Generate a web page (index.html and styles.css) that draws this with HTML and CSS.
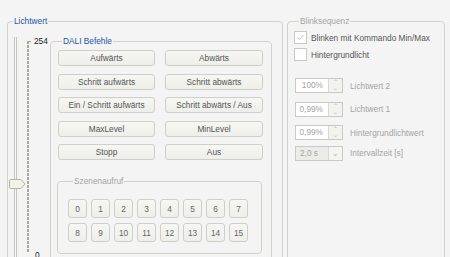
FILE: index.html
```html
<!DOCTYPE html>
<html lang="de">
<head>
    <meta charset="UTF-8">
    <title>Lichtwert</title>
    <link rel="stylesheet" href="styles.css">
</head>
<body>
    <fieldset class="group light">
        <legend>Lichtwert</legend>
        <div class="slider">
            <div class="track"></div>
            <div class="ticks"></div>
            <span class="max">254</span>
            <span class="min">0</span>
            <svg class="thumb" width="17" height="10" viewBox="0 0 17 10">
                <path d="M0.5 1.5 Q0.5 0.5 1.5 0.5 H12 L16 5 L12 9.5 H1.5 Q0.5 9.5 0.5 8.5 Z" fill="#f3f2e6" stroke="#b3b2a4"/>
            </svg>
        </div>
        <fieldset class="group dali">
            <legend>DALI Befehle</legend>
            <div class="commands">
                <button>Aufwärts</button>
                <button>Abwärts</button>
                <button>Schritt aufwärts</button>
                <button>Schritt abwärts</button>
                <button>Ein / Schritt aufwärts</button>
                <button>Schritt abwärts / Aus</button>
                <button>MaxLevel</button>
                <button>MinLevel</button>
                <button>Stopp</button>
                <button>Aus</button>
            </div>
            <fieldset class="group scenes">
                <legend>Szenenaufruf</legend>
                <div class="scene-grid">
                    <button>0</button><button>1</button><button>2</button><button>3</button>
                    <button>4</button><button>5</button><button>6</button><button>7</button>
                    <button>8</button><button>9</button><button>10</button><button>11</button>
                    <button>12</button><button>13</button><button>14</button><button>15</button>
                </div>
            </fieldset>
        </fieldset>
    </fieldset>

    <fieldset class="group blink">
        <legend>Blinksequenz</legend>
        <label class="check">
            <span class="box">
                <svg width="9" height="9" viewBox="0 0 9 9"><path d="M1.5 4.5 L3.5 6.5 L7.5 2" fill="none" stroke="#c0c0c0" stroke-width="1"/></svg>
            </span>
            Blinken mit Kommando Min/Max
        </label>
        <label class="check">
            <span class="box"></span>
            Hintergrundlicht
        </label>

        <div class="fields">
            <div class="field">
                <div class="spin"><span class="value">100%</span><span class="arrows">&#8963;<br>&#8964;</span></div>
                <span>Lichtwert 2</span>
            </div>
            <div class="field">
                <div class="spin"><span class="value">0,99%</span><span class="arrows">&#8963;<br>&#8964;</span></div>
                <span>Lichtwert 1</span>
            </div>
            <div class="field">
                <div class="spin"><span class="value">0,99%</span><span class="arrows">&#8963;<br>&#8964;</span></div>
                <span>Hintergrundlichtwert</span>
            </div>
            <div class="field interval">
                <div class="spin combo"><span class="value">2,0 s</span><span class="arrows">&#8964;</span></div>
                <span>Intervallzeit [s]</span>
            </div>
        </div>
    </fieldset>
</body>
</html>
```

FILE: styles.css
```css
body {
    font-family: "Liberation Sans", Arial, sans-serif;
    font-size: 8.3px;
    background-color: #f4f4f4;
    margin: 0;
    padding: 16px 0 0 7px;
    height: 257px;
    box-sizing: border-box;
    overflow: hidden;
    display: flex;
    align-items: flex-start;
    gap: 4px;
}
.group {
    margin: 0;
    border: 1px solid #d2d2cc;
    border-radius: 4px;
    min-width: 0;
}
.group legend {
    padding: 0 1px;
    margin-left: 5px;
    line-height: 10px;
    color: #1f52a6;
}
.light {
    width: 276px;
    height: 250px;
    box-sizing: border-box;
    padding: 10px 0 0 0;
    display: flex;
    align-items: flex-start;
}
.slider {
    position: relative;
    width: 42px;
    height: 225px;
    flex-shrink: 0;
}
.track {
    position: absolute;
    left: 6px;
    top: 1px;
    bottom: 0;
    width: 1px;
    border-left: 1px solid #c4c4c0;
    border-right: 1px solid #c4c4c0;
    background: #f8f8f8;
}
.ticks {
    position: absolute;
    left: 19px;
    top: 5px;
    height: 212px;
    width: 2px;
    background: repeating-linear-gradient(to bottom, #a9a99b 0 3px, transparent 3px 4px);
}
.ticks::before {
    content: "";
    position: absolute;
    left: 0;
    top: 0;
    width: 4px;
    height: 1px;
    background: #a9a99b;
}
.max, .min {
    position: absolute;
    left: 26px;
    line-height: 10px;
    color: #222;
}
.max { top: 0; }
.min { top: 214px; left: 27px; }
.thumb {
    position: absolute;
    left: 1px;
    top: 143px;
}
.dali {
    width: 222px;
    height: 240px;
    box-sizing: border-box;
    padding: 4px 0 0 6px;
}
.commands {
    display: grid;
    grid-template-columns: 97px 98px;
    column-gap: 10px;
    row-gap: 7.5px;
    margin-left: 1px;
}
button {
    font-family: inherit;
    font-size: inherit;
    color: #555;
    background: linear-gradient(#f6f6f3, #eeeeea);
    border: 1px solid #cfcfc8;
    border-radius: 3px;
    padding: 0;
    margin: 0;
}
.commands button {
    height: 16px;
}
.scenes {
    width: 205px;
    height: 78px;
    box-sizing: border-box;
    margin-top: 16px;
    padding: 13px 0 0 10px;
}
.scenes legend {
    color: #a4a4a4;
}
.scene-grid {
    display: grid;
    grid-template-columns: repeat(8, 19px);
    grid-auto-rows: 19px;
    column-gap: 4px;
    row-gap: 5px;
}
.scene-grid button {
    color: #666;
}
.blink {
    width: 158px;
    height: 250px;
    box-sizing: border-box;
    padding: 5px 0 0 6px;
}
.blink legend {
    color: #a4a4a4;
}
.check {
    display: flex;
    align-items: center;
    gap: 4px;
    height: 13px;
    margin-bottom: 4px;
    color: #555;
}
.box {
    width: 11px;
    height: 11px;
    border: 1px solid #c8c8c8;
    background: #fff;
    display: flex;
    align-items: center;
    justify-content: center;
}
.fields {
    margin-top: 17px;
    margin-left: 1px;
    display: flex;
    flex-direction: column;
    gap: 8.5px;
}
.field {
    display: flex;
    align-items: center;
    gap: 7px;
    color: #a4a4a4;
}
.interval {
    margin-top: -3px;
}
.spin {
    width: 48px;
    height: 15px;
    box-sizing: border-box;
    border: 1px solid #c9c9c9;
    background: #fff;
    display: flex;
}
.spin .value {
    flex: 1;
    text-align: right;
    padding-right: 5px;
    line-height: 13px;
}
.spin .arrows {
    width: 13px;
    border-left: 1px solid #d8d8d4;
    background: #f2f2ee;
    font-size: 6px;
    line-height: 6px;
    text-align: center;
    color: #b8b8b8;
}
.combo {
    background: #ebebe8;
}
.combo .value {
    text-align: left;
    padding-left: 4px;
}
.combo .arrows {
    line-height: 13px;
    font-size: 8px;
    background: #f4f4f1;
}
```
